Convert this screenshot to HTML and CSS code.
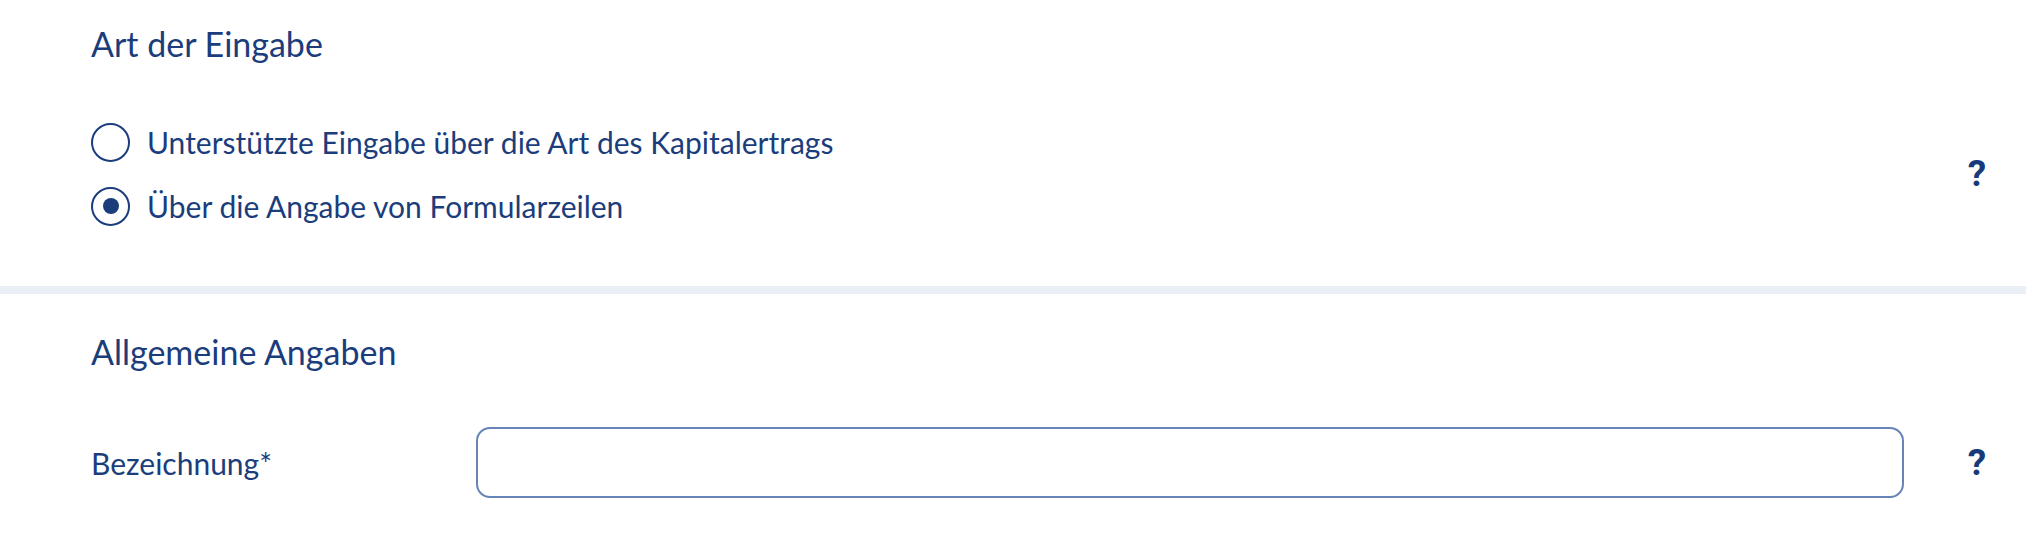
FILE: index.html
```html
<!DOCTYPE html>
<html lang="de">

<head>
  <meta charset="UTF-8">
  <meta name="viewport" content="width=device-width, initial-scale=1.0">
  <title>Art der Eingabe</title>
  <link rel="stylesheet" href="styles.css">
</head>

<body>
  <section class="block block-first">
    <h2>Art der Eingabe</h2>
    <div class="row">
      <div class="options">
        <label class="option">
          <input type="radio" name="eingabe" value="unterstuetzt">
          <span>Unterstützte Eingabe über die Art des Kapitalertrags</span>
        </label>
        <label class="option">
          <input type="radio" name="eingabe" value="formular" checked>
          <span>Über die Angabe von Formularzeilen</span>
        </label>
      </div>
      <span class="help">?</span>
    </div>
  </section>

  <div class="divider"></div>

  <section class="block">
    <h2>Allgemeine Angaben</h2>
    <div class="row">
      <label class="field-label" for="bezeichnung">Bezeichnung*</label>
      <input class="field" type="text" id="bezeichnung">
      <span class="help">?</span>
    </div>
  </section>
</body>

</html>
```

FILE: styles.css
```css
* {
  box-sizing: border-box;
}

body {
  margin: 0;
  background: #fff;
  color: #1b3d7c;
  font-family: Lato, "Noto Sans", sans-serif;
}

.block {
  padding: 38px 29px 0 91px;
}

.block-first {
  padding-top: 24px;
  padding-bottom: 60px;
}

h2 {
  margin: 0;
  font-size: 34px;
  line-height: 40px;
  font-weight: 400;
}

.row {
  display: flex;
  align-items: center;
  margin-top: 55px;
}

.block-first .row {
  margin-top: 58px;
}

.options {
  flex: 1;
  display: flex;
  flex-direction: column;
  gap: 24px;
}

.option {
  display: flex;
  align-items: center;
  gap: 17px;
  height: 40px;
  font-size: 30px;
  line-height: 40px;
  cursor: pointer;
}

.option input {
  appearance: none;
  margin: 0;
  width: 39px;
  height: 39px;
  border: 2px solid #1b3d7c;
  border-radius: 50%;
  display: flex;
  align-items: center;
  justify-content: center;
  flex: none;
}

.option input:checked::after {
  content: "";
  width: 16px;
  height: 16px;
  border-radius: 50%;
  background: #1b3d7c;
}

.field-label {
  width: 385px;
  flex: none;
  font-size: 30px;
  line-height: 40px;
}

.field {
  flex: 1;
  height: 71px;
  margin: 0;
  border: 2px solid #6684b6;
  border-radius: 14px;
  padding: 0 20px;
  font: inherit;
  font-size: 30px;
  color: inherit;
  outline: none;
}

.help {
  width: 40px;
  margin-left: 53px;
  flex: none;
  text-align: center;
  font-family: Roboto, sans-serif;
  font-weight: 700;
  font-size: 37px;
  line-height: 40px;
  color: #173a7a;
  cursor: pointer;
}

.divider {
  height: 8px;
  background: #eaeff7;
}
```
